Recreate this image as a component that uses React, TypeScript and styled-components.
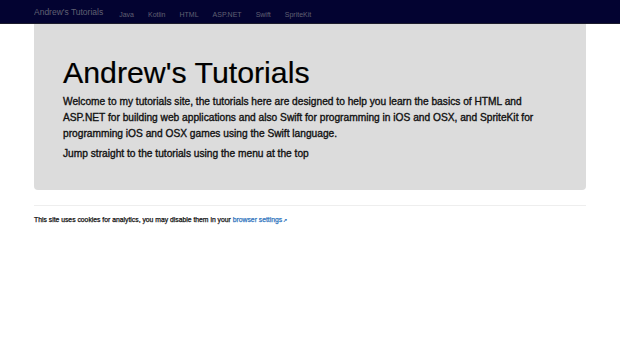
import styled, { createGlobalStyle } from "styled-components";

const GlobalStyle = createGlobalStyle`
	html, body {
		margin: 0;
		padding: 0;
		background: #fff;
		font-family: "Liberation Sans", Arial, sans-serif;
		color: #111;
	}
`;

const navLinks = ["Java", "Kotlin", "HTML", "ASP.NET", "Swift", "SpriteKit"];

function App() {
	return (
		<>
			<GlobalStyle />
			<Navbar>
				<NavInner>
					<Brand href="#">Andrew's Tutorials</Brand>
					<NavList>
						{navLinks.map((link) => (
							<NavItem key={link}>
								<NavLink href="#">{link}</NavLink>
							</NavItem>
						))}
					</NavList>
				</NavInner>
			</Navbar>
			<Container>
				<Jumbotron>
					<Title>Andrew's Tutorials</Title>
					<Lead>
						Welcome to my tutorials site, the tutorials here are designed to help you learn the basics of HTML and
						ASP.NET for building web applications and also Swift for programming in iOS and OSX, and SpriteKit for
						programming iOS and OSX games using the Swift language.
					</Lead>
					<Lead>Jump straight to the tutorials using the menu at the top</Lead>
				</Jumbotron>
				<Divider />
				<Cookie>
					This site uses cookies for analytics, you may disable them in your{" "}
					<CookieLink href="#">browser settings</CookieLink>
				</Cookie>
			</Container>
		</>
	);
}

export default App;

const Navbar = styled.nav`
	height: 23px;
	background-color: #030331;
	border-bottom: 1px solid #1c1c2c;
`;

const NavInner = styled.div`
	width: 552px;
	height: 100%;
	margin: 0 auto;
	display: flex;
	align-items: center;
	padding-top: 1px;
	box-sizing: border-box;
`;

const Brand = styled.a`
	font-size: 8.5px;
	color: #9d9d9d;
	text-decoration: none;
	margin-right: 9px;
	opacity: 0.6;
`;

const NavList = styled.ul`
	display: flex;
	list-style: none;
	margin: 0;
	padding: 0;
`;

const NavItem = styled.li`
	padding: 0 7px;
`;

const NavLink = styled.a`
	font-size: 7px;
	color: #9d9d9d;
	text-decoration: none;
	opacity: 0.6;
`;

const Container = styled.main`
	width: 552px;
	margin: 0 auto;
`;

const Jumbotron = styled.section`
	background-color: #dcdcdc;
	border-radius: 0 0 4px 4px;
	padding: 32px 29px 28px;
`;

const Title = styled.h1`
	margin: 0 0 5px;
	font-size: 30.3px;
	font-weight: normal;
	line-height: 33px;
	color: #000;
	-webkit-text-stroke: 0.2px #000;
`;

const Lead = styled.p`
	margin: 0 0 4px;
	font-size: 10.2px;
	font-weight: normal;
	line-height: 16px;
	color: #111;
	-webkit-text-stroke: 0.35px #111;
	&:last-child {
		margin-bottom: 0;
	}
`;

const Divider = styled.hr`
	margin: 15px 0 0;
	border: 0;
	border-top: 1px solid #eee;
`;

const Cookie = styled.p`
	margin: 8px 0 0;
	font-size: 6.8px;
	font-weight: normal;
	line-height: 12px;
	color: #111;
	-webkit-text-stroke: 0.25px #111;
`;

const CookieLink = styled.a`
	color: #2f74bd;
	-webkit-text-stroke: 0.25px #2f74bd;
	text-decoration: none;
	&::after {
		content: "↗";
		font-size: 5px;
		margin-left: 1px;
	}
`;
